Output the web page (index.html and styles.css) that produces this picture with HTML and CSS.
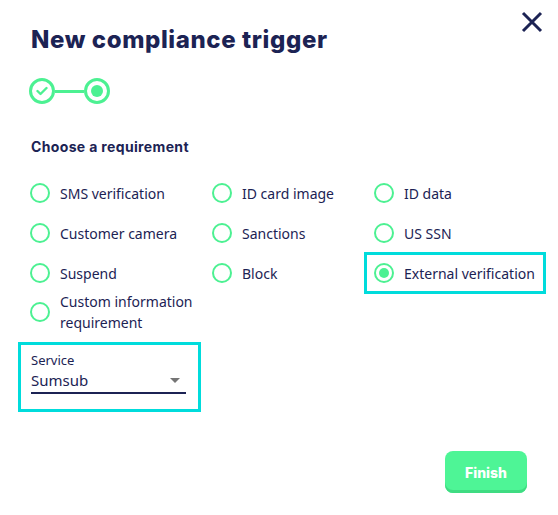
FILE: index.html
```html
<!DOCTYPE html>
<html lang="en">
   <head>
      <meta charset="UTF-8">
      <title>New compliance trigger</title>
      <link rel="stylesheet" href="styles.css">
   </head>
   <body>
      <div class="dialog">
         <button class="close" aria-label="Close">
            <svg width="22" height="22" viewBox="0 0 22 22"><path d="M2 2 L20 20 M20 2 L2 20" stroke="#1c2354" stroke-width="3" fill="none"/></svg>
         </button>
         <h1>New compliance trigger</h1>
         <div class="stepper">
            <span class="step done">
               <svg width="12" height="10" viewBox="0 0 12 10"><path d="M1.5 5 L4.5 8 L10.5 2" stroke="#4cf192" stroke-width="2.4" fill="none" stroke-linecap="round" stroke-linejoin="round"/></svg>
            </span>
            <span class="step-line"></span>
            <span class="step current"><span class="dot"></span></span>
         </div>
         <h2>Choose a requirement</h2>
         <div class="options">
            <label class="option"><span class="radio"></span><span>SMS verification</span></label>
            <label class="option"><span class="radio"></span><span>ID card image</span></label>
            <label class="option"><span class="radio"></span><span>ID data</span></label>
            <label class="option"><span class="radio"></span><span>Customer camera</span></label>
            <label class="option"><span class="radio"></span><span>Sanctions</span></label>
            <label class="option"><span class="radio"></span><span>US SSN</span></label>
            <label class="option"><span class="radio"></span><span>Suspend</span></label>
            <label class="option"><span class="radio"></span><span>Block</span></label>
            <label class="option selected"><span class="radio checked"></span><span>External verification</span></label>
            <label class="option multi"><span class="radio"></span><span>Custom information<br>requirement</span></label>
         </div>
         <div class="service">
            <div class="service-label">Service</div>
            <div class="select">
               <span>Sumsub</span>
               <span class="caret"></span>
            </div>
         </div>
         <div class="actions">
            <button class="finish">Finish</button>
         </div>
      </div>
   </body>
</html>
```

FILE: styles.css
```css
body {
margin: 0;
background-color: #fff;
font-family: "Noto Sans", "Open Sans", sans-serif;
color: #1c2354;
}
.dialog {
position: relative;
width: 558px;
height: 515px;
box-sizing: border-box;
padding: 25px 0 0 0;
}
.close {
position: absolute;
top: 11px;
right: 15px;
border: none;
background: none;
padding: 0;
cursor: pointer;
}
h1 {
margin: 0 0 0 31px;
font-family: Inter, sans-serif;
font-weight: 800;
font-size: 24px;
line-height: 29px;
letter-spacing: 0.6px;
}
.stepper {
display: flex;
align-items: center;
margin: 24px 0 0 29px;
}
.step {
width: 20px;
height: 20px;
border: 3px solid #4cf192;
border-radius: 50%;
display: flex;
align-items: center;
justify-content: center;
}
.step-line {
width: 29px;
height: 3px;
background-color: #4cf192;
}
.dot {
width: 12px;
height: 12px;
border-radius: 50%;
background-color: #4cf192;
}
h2 {
margin: 34px 0 17px 31px;
font-family: Inter, sans-serif;
font-weight: 700;
font-size: 14px;
line-height: 18px;
letter-spacing: 0.35px;
}
.options {
display: grid;
grid-template-columns: 182px 162px 180px;
margin-left: 21px;
}
.option {
display: flex;
align-items: center;
gap: 10px;
min-height: 40px;
box-sizing: border-box;
padding-left: 9px;
font-size: 14px;
line-height: 21px;
}
.option.selected {
outline: 3px solid #00dcdc;
outline-offset: -2px;
}
.option.multi {
margin-top: -2px;
}
.radio {
flex: none;
width: 20px;
height: 20px;
box-sizing: border-box;
border: 2.5px solid #4cf192;
border-radius: 50%;
display: flex;
align-items: center;
justify-content: center;
}
.radio.checked::after {
content: "";
width: 10px;
height: 10px;
border-radius: 50%;
background-color: #4cf192;
}
.service {
width: 183px;
height: 70px;
box-sizing: border-box;
margin: 9px 0 0 18px;
border: 3px solid #00dcdc;
padding: 7px 12px 0 10px;
}
.service-label {
font-size: 13px;
line-height: 16px;
}
.select {
display: flex;
align-items: center;
justify-content: space-between;
height: 24px;
border-bottom: 2px solid #1c2354;
font-size: 15px;
}
.caret {
width: 0;
height: 0;
margin-right: 6px;
border-left: 5px solid transparent;
border-right: 5px solid transparent;
border-top: 5px solid #757575;
}
.actions {
display: flex;
justify-content: flex-end;
padding: 39px 31px 0 0;
}
.finish {
width: 82px;
height: 42px;
border: none;
border-radius: 8px;
background-color: #4ef596;
box-shadow: inset 0 -3px 0 #3fdc82;
color: #fff;
font-family: Inter, sans-serif;
font-weight: 800;
font-size: 14px;
cursor: pointer;
}
```
